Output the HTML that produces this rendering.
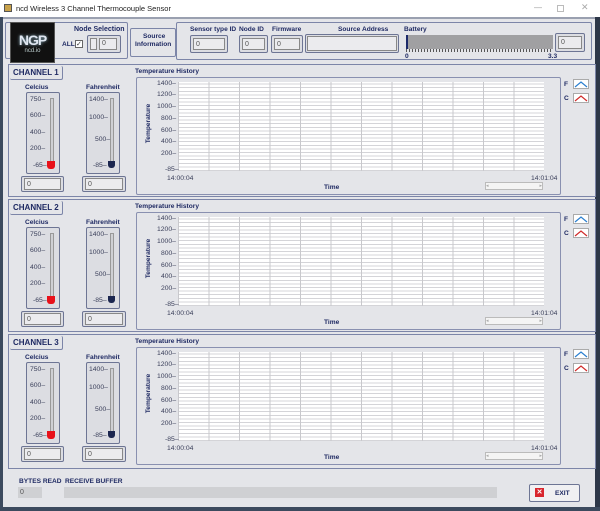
<!DOCTYPE html><html><head><style>
*{box-sizing:border-box;margin:0;padding:0}
body{width:600px;height:511px;overflow:hidden;background:#e4e5e9;font-family:"Liberation Sans",sans-serif;position:relative}
.a{position:absolute}
.t{color:#1f2a63;font-weight:bold;font-size:6.6px;white-space:nowrap}
.n{color:#3a3f5a;font-size:6.8px;white-space:nowrap}
.fr{border:1px solid #7c85a8;border-radius:2px}
.box{background:#dcdde2;border:1px solid #6d7594;border-radius:2px}
.inp{background:#ebebee;border:1px solid #888;font-size:7px;color:#555;padding:2px 2px}
.plot{background-color:#fff;background-image:repeating-linear-gradient(90deg,#c8c8cc 0 1px,transparent 1px 30.5px),repeating-linear-gradient(0deg,#d4d4d8 0 1px,transparent 1px 3.6px)}
.ch{position:absolute;left:8px;width:588px;height:133px;border:1px solid #7c85a8}
svg{display:block}
</style></head><body>
<div class="a" style="left:0;top:0;width:600px;height:17px;background:#fff"></div>
<div class="a" style="left:4px;top:4px;width:8px;height:8px;background:#c9a24a;border:1px solid #555"></div>
<div class="a" style="left:16px;top:4px;font-size:7.5px;color:#222">ncd Wireless 3 Channel Thermocouple Sensor</div>
<div class="a" style="left:534px;top:3px;font-size:8px;color:#999">—</div>
<div class="a" style="left:557px;top:5px;width:7px;height:7px;border:1px solid #bbb"></div>
<div class="a" style="left:581px;top:2px;font-size:9px;color:#aaa">✕</div>
<div class="a" style="left:0;top:17px;width:600px;height:2px;background:#9aa0b0"></div>
<div class="a" style="left:0;top:17px;width:3px;height:494px;background:#3c4a5e"></div>
<div class="a" style="left:595px;top:17px;width:5px;height:494px;background:#2d3748"></div>
<div class="a" style="left:0;top:507px;width:600px;height:4px;background:#3c4a5e"></div>

<!-- top -->
<div class="a fr" style="left:5px;top:22px;width:123px;height:37px"></div>
<div class="a" style="left:10px;top:22px;width:45px;height:41px;background:#111;border:1px solid #555;text-align:center">
<div style="color:#dfe6f0;font-weight:bold;font-size:14px;letter-spacing:-1px;margin-top:9px;text-shadow:0 0 3px #8ab">NGP</div>
<div style="color:#bcc;font-size:6px">ncd.io</div></div>
<div class="a t" style="left:74px;top:26px;font-size:7px">Node Selection</div>
<div class="a t" style="left:62px;top:41px">ALL</div>
<div class="a" style="left:75px;top:40px;width:8px;height:8px;border:1px solid #666;background:#fff;font-size:7px;line-height:7px;color:#333">✓</div>
<div class="a box" style="left:87px;top:35px;width:34px;height:18px"></div>
<div class="a inp" style="left:90px;top:38px;width:7px;height:12px;padding:0"></div>
<div class="a inp" style="left:99px;top:38px;width:18px;height:12px;padding:1px 2px">0</div>
<div class="a fr" style="left:130px;top:28px;width:46px;height:29px"></div>
<div class="a t" style="left:143px;top:33px">Source</div>
<div class="a t" style="left:135px;top:41px">Information</div>
<div class="a fr" style="left:176px;top:22px;width:416px;height:38px"></div>
<div class="a t" style="left:190px;top:26px">Sensor type ID</div>
<div class="a box" style="left:190px;top:35px;width:38px;height:18px"></div><div class="a inp" style="left:193px;top:38px;width:32px;height:12px">0</div>
<div class="a t" style="left:239px;top:26px">Node ID</div>
<div class="a box" style="left:239px;top:35px;width:29px;height:18px"></div><div class="a inp" style="left:242px;top:38px;width:23px;height:12px">0</div>
<div class="a t" style="left:272px;top:26px">Firmware</div>
<div class="a box" style="left:271px;top:35px;width:32px;height:18px"></div><div class="a inp" style="left:274px;top:38px;width:26px;height:12px">0</div>
<div class="a t" style="left:338px;top:26px">Source Address</div>
<div class="a box" style="left:305px;top:34px;width:94px;height:19px"></div><div class="a inp" style="left:307px;top:36px;width:90px;height:15px"></div>
<div class="a t" style="left:404px;top:26px">Battery</div>
<div class="a" style="left:406px;top:35px;width:147px;height:14px;background:#a0a0a2"></div>
<div class="a" style="left:406px;top:35px;width:2px;height:14px;background:#1c2a6a"></div>
<div class="a" style="left:406px;top:49px;width:147px;height:3px;background:repeating-linear-gradient(90deg,#555 0 1px,transparent 1px 3px)"></div>
<div class="a t" style="left:405px;top:53px">0</div><div class="a t" style="left:548px;top:53px">3.3</div>
<div class="a box" style="left:555px;top:33px;width:30px;height:19px"></div><div class="a inp" style="left:558px;top:36px;width:24px;height:13px">0</div>

<!-- channels -->
<div class="ch" style="top:64px">
<div class="a fr t" style="left:1px;top:1px;padding:2px 3px;font-size:8px;border-top:none;border-left:none">CHANNEL 1</div>
<div class="a t" style="left:16px;top:19px">Celcius</div><div class="a t" style="left:77px;top:19px">Fahrenheit</div>
<div class="a box" style="left:17px;top:27px;width:34px;height:82px"></div>
<div class="a" style="left:41px;top:33px;width:4px;height:66px;background:#cfd0d4;border:1px solid #999"></div>
<div class="a" style="left:38px;top:96px;width:8px;height:8px;background:#e8111a;border-radius:0 0 3px 3px"></div>
<div class="a n" style="left:21px;top:31px">750–</div><div class="a n" style="left:21px;top:47px">600–</div><div class="a n" style="left:21px;top:64px">400–</div><div class="a n" style="left:21px;top:80px">200–</div><div class="a n" style="left:24px;top:97px">-65–</div>
<div class="a box" style="left:77px;top:27px;width:34px;height:82px"></div>
<div class="a" style="left:101px;top:33px;width:4px;height:66px;background:#cfd0d4;border:1px solid #999"></div>
<div class="a" style="left:99px;top:96px;width:7px;height:7px;background:#1c2750;border-radius:0 0 3px 3px"></div>
<div class="a n" style="left:80px;top:31px">1400–</div><div class="a n" style="left:80px;top:49px">1000–</div><div class="a n" style="left:86px;top:71px">500–</div><div class="a n" style="left:84px;top:97px">-85–</div>
<div class="a box" style="left:12px;top:111px;width:43px;height:16px"></div><div class="a inp" style="left:15px;top:113px;width:37px;height:12px">0</div>
<div class="a box" style="left:73px;top:111px;width:44px;height:16px"></div><div class="a inp" style="left:76px;top:113px;width:38px;height:12px">0</div>
<div class="a t" style="left:126px;top:3px">Temperature History</div>
<div class="a fr" style="left:127px;top:12px;width:425px;height:118px;border-color:#8990b0"></div>
<div class="a plot" style="left:169px;top:17px;width:366px;height:89px"></div>
<div class="a n" style="left:148px;top:15px">1400–</div><div class="a n" style="left:148px;top:26px">1200–</div><div class="a n" style="left:148px;top:38px">1000–</div><div class="a n" style="left:152px;top:50px">800–</div><div class="a n" style="left:152px;top:62px">600–</div><div class="a n" style="left:152px;top:73px">400–</div><div class="a n" style="left:152px;top:85px">200–</div><div class="a n" style="left:156px;top:101px">-85–</div>
<div class="a t" style="left:120px;top:55px;transform:rotate(-90deg)">Temperature</div>
<div class="a n" style="left:158px;top:110px">14:00:04</div><div class="a n" style="left:522px;top:110px">14:01:04</div>
<div class="a t" style="left:315px;top:119px">Time</div>
<div class="a" style="left:476px;top:117px;width:58px;height:8px;background:#f4f4f4;border:1px solid #bbb;font-size:5px;color:#aaa">◂<span style="float:right">▸</span></div>
<div class="a t" style="left:555px;top:16px">F</div><div class="a" style="left:564px;top:14px;width:16px;height:10px;background:#fff;border:1px solid #aaa"><svg width="14" height="8"><path d="M1 7 L7 2 L13 7" stroke="#2a7fd0" fill="none" stroke-width="1.2"/></svg></div>
<div class="a t" style="left:555px;top:30px">C</div><div class="a" style="left:564px;top:28px;width:16px;height:10px;background:#fff;border:1px solid #aaa"><svg width="14" height="8"><path d="M1 7 L7 2 L13 7" stroke="#d02a2a" fill="none" stroke-width="1.2"/></svg></div>
</div>

<div class="ch" style="top:199px">
<div class="a fr t" style="left:1px;top:1px;padding:2px 3px;font-size:8px;border-top:none;border-left:none">CHANNEL 2</div>
<div class="a t" style="left:16px;top:19px">Celcius</div><div class="a t" style="left:77px;top:19px">Fahrenheit</div>
<div class="a box" style="left:17px;top:27px;width:34px;height:82px"></div>
<div class="a" style="left:41px;top:33px;width:4px;height:66px;background:#cfd0d4;border:1px solid #999"></div>
<div class="a" style="left:38px;top:96px;width:8px;height:8px;background:#e8111a;border-radius:0 0 3px 3px"></div>
<div class="a n" style="left:21px;top:31px">750–</div><div class="a n" style="left:21px;top:47px">600–</div><div class="a n" style="left:21px;top:64px">400–</div><div class="a n" style="left:21px;top:80px">200–</div><div class="a n" style="left:24px;top:97px">-65–</div>
<div class="a box" style="left:77px;top:27px;width:34px;height:82px"></div>
<div class="a" style="left:101px;top:33px;width:4px;height:66px;background:#cfd0d4;border:1px solid #999"></div>
<div class="a" style="left:99px;top:96px;width:7px;height:7px;background:#1c2750;border-radius:0 0 3px 3px"></div>
<div class="a n" style="left:80px;top:31px">1400–</div><div class="a n" style="left:80px;top:49px">1000–</div><div class="a n" style="left:86px;top:71px">500–</div><div class="a n" style="left:84px;top:97px">-85–</div>
<div class="a box" style="left:12px;top:111px;width:43px;height:16px"></div><div class="a inp" style="left:15px;top:113px;width:37px;height:12px">0</div>
<div class="a box" style="left:73px;top:111px;width:44px;height:16px"></div><div class="a inp" style="left:76px;top:113px;width:38px;height:12px">0</div>
<div class="a t" style="left:126px;top:3px">Temperature History</div>
<div class="a fr" style="left:127px;top:12px;width:425px;height:118px;border-color:#8990b0"></div>
<div class="a plot" style="left:169px;top:17px;width:366px;height:89px"></div>
<div class="a n" style="left:148px;top:15px">1400–</div><div class="a n" style="left:148px;top:26px">1200–</div><div class="a n" style="left:148px;top:38px">1000–</div><div class="a n" style="left:152px;top:50px">800–</div><div class="a n" style="left:152px;top:62px">600–</div><div class="a n" style="left:152px;top:73px">400–</div><div class="a n" style="left:152px;top:85px">200–</div><div class="a n" style="left:156px;top:101px">-85–</div>
<div class="a t" style="left:120px;top:55px;transform:rotate(-90deg)">Temperature</div>
<div class="a n" style="left:158px;top:110px">14:00:04</div><div class="a n" style="left:522px;top:110px">14:01:04</div>
<div class="a t" style="left:315px;top:119px">Time</div>
<div class="a" style="left:476px;top:117px;width:58px;height:8px;background:#f4f4f4;border:1px solid #bbb;font-size:5px;color:#aaa">◂<span style="float:right">▸</span></div>
<div class="a t" style="left:555px;top:16px">F</div><div class="a" style="left:564px;top:14px;width:16px;height:10px;background:#fff;border:1px solid #aaa"><svg width="14" height="8"><path d="M1 7 L7 2 L13 7" stroke="#2a7fd0" fill="none" stroke-width="1.2"/></svg></div>
<div class="a t" style="left:555px;top:30px">C</div><div class="a" style="left:564px;top:28px;width:16px;height:10px;background:#fff;border:1px solid #aaa"><svg width="14" height="8"><path d="M1 7 L7 2 L13 7" stroke="#d02a2a" fill="none" stroke-width="1.2"/></svg></div>
</div>

<div class="ch" style="top:334px;height:135px">
<div class="a fr t" style="left:1px;top:1px;padding:2px 3px;font-size:8px;border-top:none;border-left:none">CHANNEL 3</div>
<div class="a t" style="left:16px;top:19px">Celcius</div><div class="a t" style="left:77px;top:19px">Fahrenheit</div>
<div class="a box" style="left:17px;top:27px;width:34px;height:82px"></div>
<div class="a" style="left:41px;top:33px;width:4px;height:66px;background:#cfd0d4;border:1px solid #999"></div>
<div class="a" style="left:38px;top:96px;width:8px;height:8px;background:#e8111a;border-radius:0 0 3px 3px"></div>
<div class="a n" style="left:21px;top:31px">750–</div><div class="a n" style="left:21px;top:47px">600–</div><div class="a n" style="left:21px;top:64px">400–</div><div class="a n" style="left:21px;top:80px">200–</div><div class="a n" style="left:24px;top:97px">-65–</div>
<div class="a box" style="left:77px;top:27px;width:34px;height:82px"></div>
<div class="a" style="left:101px;top:33px;width:4px;height:66px;background:#cfd0d4;border:1px solid #999"></div>
<div class="a" style="left:99px;top:96px;width:7px;height:7px;background:#1c2750;border-radius:0 0 3px 3px"></div>
<div class="a n" style="left:80px;top:31px">1400–</div><div class="a n" style="left:80px;top:49px">1000–</div><div class="a n" style="left:86px;top:71px">500–</div><div class="a n" style="left:84px;top:97px">-85–</div>
<div class="a box" style="left:12px;top:111px;width:43px;height:16px"></div><div class="a inp" style="left:15px;top:113px;width:37px;height:12px">0</div>
<div class="a box" style="left:73px;top:111px;width:44px;height:16px"></div><div class="a inp" style="left:76px;top:113px;width:38px;height:12px">0</div>
<div class="a t" style="left:126px;top:3px">Temperature History</div>
<div class="a fr" style="left:127px;top:12px;width:425px;height:118px;border-color:#8990b0"></div>
<div class="a plot" style="left:169px;top:17px;width:366px;height:89px"></div>
<div class="a n" style="left:148px;top:15px">1400–</div><div class="a n" style="left:148px;top:26px">1200–</div><div class="a n" style="left:148px;top:38px">1000–</div><div class="a n" style="left:152px;top:50px">800–</div><div class="a n" style="left:152px;top:62px">600–</div><div class="a n" style="left:152px;top:73px">400–</div><div class="a n" style="left:152px;top:85px">200–</div><div class="a n" style="left:156px;top:101px">-85–</div>
<div class="a t" style="left:120px;top:55px;transform:rotate(-90deg)">Temperature</div>
<div class="a n" style="left:158px;top:110px">14:00:04</div><div class="a n" style="left:522px;top:110px">14:01:04</div>
<div class="a t" style="left:315px;top:119px">Time</div>
<div class="a" style="left:476px;top:117px;width:58px;height:8px;background:#f4f4f4;border:1px solid #bbb;font-size:5px;color:#aaa">◂<span style="float:right">▸</span></div>
<div class="a t" style="left:555px;top:16px">F</div><div class="a" style="left:564px;top:14px;width:16px;height:10px;background:#fff;border:1px solid #aaa"><svg width="14" height="8"><path d="M1 7 L7 2 L13 7" stroke="#2a7fd0" fill="none" stroke-width="1.2"/></svg></div>
<div class="a t" style="left:555px;top:30px">C</div><div class="a" style="left:564px;top:28px;width:16px;height:10px;background:#fff;border:1px solid #aaa"><svg width="14" height="8"><path d="M1 7 L7 2 L13 7" stroke="#d02a2a" fill="none" stroke-width="1.2"/></svg></div>
</div>

<!-- bottom -->
<div class="a t" style="left:19px;top:478px">BYTES READ</div>
<div class="a t" style="left:65px;top:478px">RECEIVE BUFFER</div>
<div class="a" style="left:18px;top:487px;width:24px;height:11px;background:#cfd0d3;font-size:7px;color:#555;padding:2px 2px">0</div>
<div class="a" style="left:64px;top:487px;width:433px;height:11px;background:#cfd0d3"></div>
<div class="a" style="left:529px;top:484px;width:51px;height:18px;background:#f0f0f2;border:1px solid #6d7594;border-radius:2px"></div>
<div class="a" style="left:535px;top:488px;width:9px;height:9px;background:#d8262e;color:#fff;font-size:7px;line-height:9px;text-align:center;font-weight:bold">✕</div>
<div class="a t" style="left:555px;top:490px">EXIT</div>
</body></html>
